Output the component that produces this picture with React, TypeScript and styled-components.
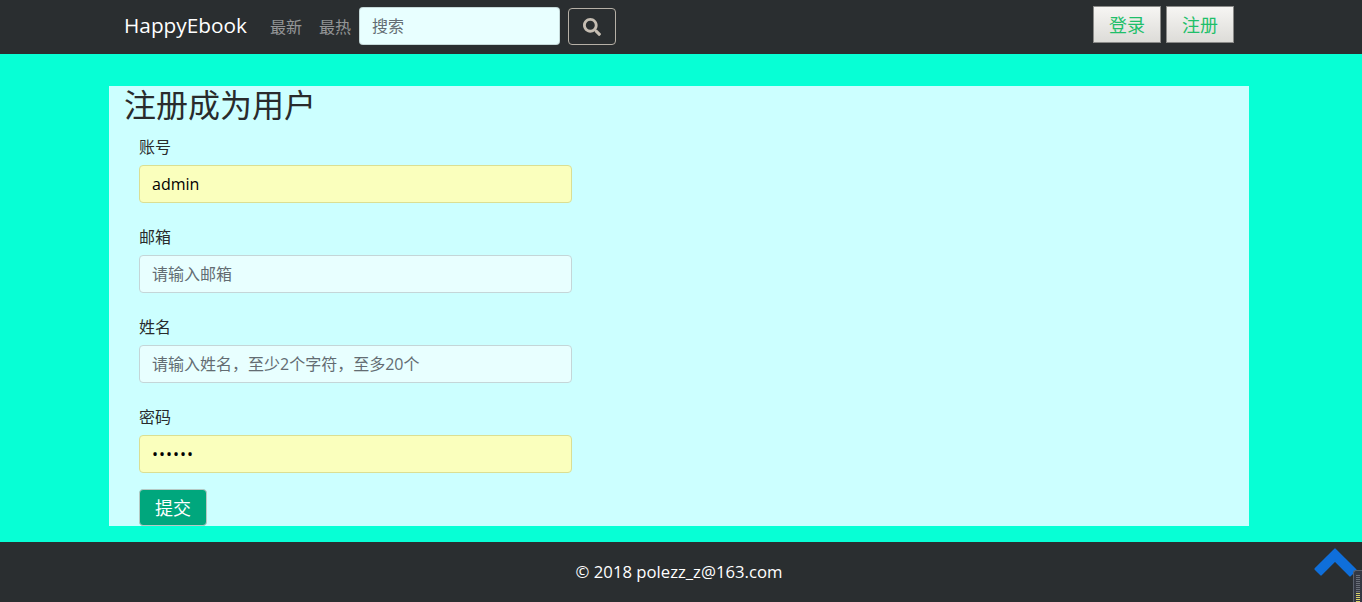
import React from "react";
import styled, { createGlobalStyle } from "styled-components";
import { FaSearch } from "react-icons/fa";

const FONT = `"Open Sans", "Noto Sans CJK SC", sans-serif`;

const GlobalStyle = createGlobalStyle`
  html, body {
    margin: 0;
    padding: 0;
    height: 100%;
    overflow: hidden;
  }
  body {
    font-family: ${FONT};
    font-size: 16px;
    color: #292b2c;
    background: #07ffd5;
  }
  * {
    box-sizing: border-box;
  }
`;

const Page = styled.div`
  position: relative;
  display: flex;
  flex-direction: column;
  height: 602px;
  overflow: hidden;
`;

const NavBar = styled.nav`
  height: 54px;
  flex: none;
  padding: 0 4px 2px 0;
  background: #2a2e30;
`;

const NavInner = styled.div`
  width: 1140px;
  height: 100%;
  margin: 0 auto;
  padding: 0 15px;
  display: flex;
  align-items: center;
`;

const Brand = styled.a`
  color: #fff;
  font-size: 20.8px;
  margin-right: 23px;
  margin-bottom: 2px;
`;

const NavLink = styled.a`
  color: rgba(255, 255, 255, 0.5);
  font-size: 16px;
  margin-right: 17px;
  margin-bottom: 1px;
  &:last-of-type {
    margin-right: 8px;
  }
`;

const SearchInput = styled.input`
  width: 201px;
  height: 38px;
  padding: 0 12px;
  font: 16px ${FONT};
  color: #464a4c;
  background: #e8ffff;
  border: 1px solid rgba(0, 0, 0, 0.15);
  border-radius: 4px;
  outline: none;
  margin-right: 8px;
  &::placeholder {
    color: #636c72;
    opacity: 1;
  }
`;

const SearchButton = styled.button`
  width: 48px;
  height: 37px;
  margin-top: 1px;
  display: flex;
  align-items: center;
  justify-content: center;
  background: transparent;
  border: 1px solid #b6b0a6;
  border-radius: 4px;
  color: #c5bdb2;
  font-size: 18px;
  padding: 0;
`;

const NavRight = styled.div`
  margin-left: auto;
  margin-bottom: 3px;
  display: flex;
  gap: 5px;
`;

const AuthButton = styled.button`
  width: 68px;
  height: 37px;
  font: 18px ${FONT};
  color: #1fbf6a;
  background: linear-gradient(#f6f5f3, #dddcd8);
  border: 1px solid #8a8a88;
  border-radius: 0;
  padding: 0 0 2px;
`;

const Main = styled.main`
  flex: 1;
  padding: 32px 4px 16px 0;
`;

const Panel = styled.section`
  width: 1140px;
  height: 440px;
  margin: 0 auto;
  padding: 0 15px;
  background: #ccffff;
`;

const Title = styled.h2`
  margin: 0;
  font-size: 32px;
  font-weight: 400;
  line-height: 38px;
  color: #292b2c;
`;

const Form = styled.form`
  padding: 11px 15px 0;
  width: 463px;
`;

const Group = styled.div`
  margin-bottom: 22px;
  &:last-of-type {
    margin-bottom: 16px;
  }
`;

const Label = styled.label`
  display: block;
  font-size: 16px;
  line-height: 24px;
  margin-bottom: 6px;
  color: #292b2c;
`;

const Field = styled.input<{ $filled?: boolean }>`
  display: block;
  width: 100%;
  height: 38px;
  padding: 0 12px;
  font: 16px ${FONT};
  color: #000;
  background: ${({ $filled }) => ($filled ? "#faffbd" : "#e8ffff")};
  border: 1px solid ${({ $filled }) => ($filled ? "#dadf94" : "#c4d6d8")};
  border-radius: 4px;
  outline: none;
  &[type="password"] {
    letter-spacing: 1px;
  }
  &::placeholder {
    color: #636c72;
    opacity: 1;
  }
`;

const Submit = styled.button`
  display: block;
  width: 68px;
  height: 37px;
  background: #00a77d;
  color: #fff;
  font: 18px ${FONT};
  border: 1px solid #b7c9c4;
  border-radius: 4px;
  padding: 0 0 2px;
`;

const Footer = styled.footer`
  height: 60px;
  flex: none;
  padding: 0 4px 2px 0;
  background: #2a2e30;
  color: #fff;
  font-size: 16.7px;
  display: flex;
  align-items: center;
  justify-content: center;
`;

const BackToTop = styled.svg`
  position: absolute;
  left: 1310px;
  top: 544px;
`;

const ScrollWidget = styled.div`
  position: absolute;
  left: 1353px;
  top: 570px;
  width: 9px;
  height: 32px;
  padding: 4px 2px 0 2px;
  border-radius: 3px 0 0 0;
  background: #343843;
  border: 1px solid #59606c;
  border-width: 1px 0 0 1px;
`;

const ScrollStripes = styled.div`
  height: 100%;
  background:
    repeating-linear-gradient(transparent 0 1px, #343843 1px 2px),
    linear-gradient(#6a6f78 0 17px, #d8d16a 17px);
`;

export default function App() {
  return (
    <Page>
      <GlobalStyle />
      <NavBar>
        <NavInner>
          <Brand>HappyEbook</Brand>
          <NavLink>最新</NavLink>
          <NavLink>最热</NavLink>
          <SearchInput placeholder="搜索" />
          <SearchButton type="button" aria-label="搜索">
            <FaSearch />
          </SearchButton>
          <NavRight>
            <AuthButton type="button">登录</AuthButton>
            <AuthButton type="button">注册</AuthButton>
          </NavRight>
        </NavInner>
      </NavBar>
      <Main>
        <Panel>
          <Title>注册成为用户</Title>
          <Form onSubmit={(e) => e.preventDefault()}>
            <Group>
              <Label>账号</Label>
              <Field $filled defaultValue="admin" />
            </Group>
            <Group>
              <Label>邮箱</Label>
              <Field placeholder="请输入邮箱" />
            </Group>
            <Group>
              <Label>姓名</Label>
              <Field placeholder="请输入姓名，至少2个字符，至多20个" />
            </Group>
            <Group>
              <Label>密码</Label>
              <Field $filled type="password" defaultValue="123456" />
            </Group>
            <Submit type="submit">提交</Submit>
          </Form>
        </Panel>
      </Main>
      <Footer>© 2018 polezz_z@163.com</Footer>
      <BackToTop width="50" height="36" viewBox="0 0 50 36">
        <path
          d="M25 5.4 L45.6 26 L40 31.6 L25 16.6 L11 30.6 L5.4 25 Z"
          fill="#0f6fdb"
          stroke="#0f6fdb"
          strokeWidth="2"
          strokeLinejoin="round"
        />
      </BackToTop>
      <ScrollWidget>
        <ScrollStripes />
      </ScrollWidget>
    </Page>
  );
}
